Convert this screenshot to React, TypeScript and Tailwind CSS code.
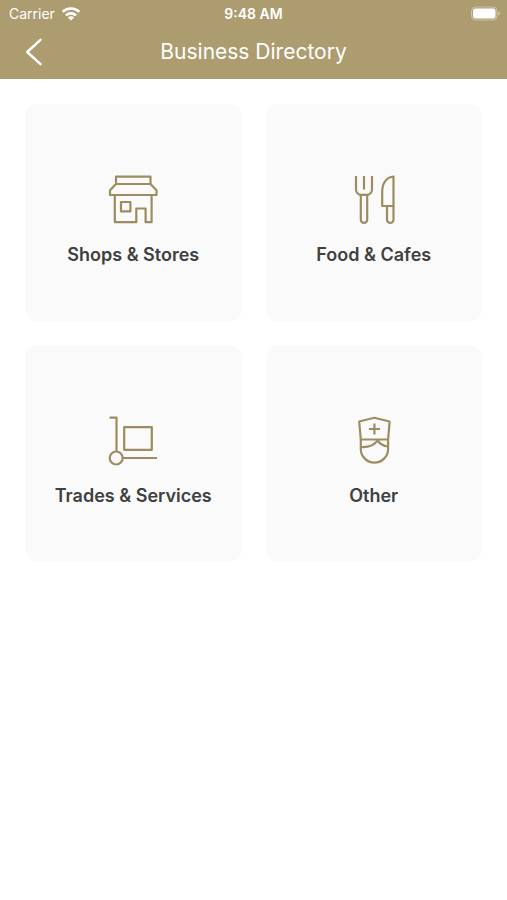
import type { ReactNode } from "react";

type Category = {
  id: string;
  name: string;
  icon: ReactNode;
};

const categories: Category[] = [
  {
    id: "shops",
    name: "Shops & Stores",
    icon: (
      <>
        <path d="M8 9V1.700h34.500V9z" />
        <path d="M8 9L2 15.200V20h46.500v-4.800L42.500 9" />
        <path d="M6.800 20v27.200h21.500V33.500h9.300v13.700h6V20" />
        <path d="M13 27h9.400v9.400H13z" />
      </>
    ),
  },
  {
    id: "food",
    name: "Food & Cafes",
    icon: (
      <>
        <path d="M7 1v13.300c0 3.200 2.200 5.500 5.300 5.500h5.400c3.100 0 5.300-2.300 5.300-5.500V1M15 1v13.500" />
        <path d="M11.800 20v24.700a3.200 3.200 0 0 0 6.400 0V20" />
        <path d="M44.500 1.500V31H33.200V16.500c0-8 4.300-14.500 11.300-15z" />
        <path d="M38 31v13.700a3.200 3.200 0 0 0 6.500 0V31" />
      </>
    ),
  },
  {
    id: "trades",
    name: "Trades & Services",
    icon: (
      <>
        <path d="M1.500 1.700h7v34" />
        <circle cx="8.200" cy="42" r="6.500" />
        <path d="M14.700 42H49M16.200 11.200h27.600v22.600H16.200z" />
      </>
    ),
  },
  {
    id: "other",
    name: "Other",
    icon: (
      <>
        <path d="M11.800 23.500l-1.600-18 15.200-3.700 15.200 3.700-1.500 18z" />
        <path d="M11.800 23.500V33a13.650 13.650 0 0 0 27.300 0v-9.500" />
        <path d="M11.800 31c7.400.5 13.200-1.200 16.900-6.600 2.100 3.600 5.500 5.600 10.400 6.100" />
        <path d="M25.400 7.500v11M20 13h11" />
      </>
    ),
  },
];

function StatusBar() {
  return (
    <div className="grid grid-cols-3 items-center h-7 px-1.5">
      <div className="flex items-center gap-1.5 pl-[3px] text-sm">
        <span>Carrier</span>
        <svg width="20" height="14" viewBox="0 0 20 14" fill="none" stroke="currentColor" strokeWidth="2.6" aria-hidden="true">
          <path d="M1.700 4.900a12 12 0 0 1 16.600 0" />
          <path d="M4.900 8.400a7.400 7.400 0 0 1 10.200 0" />
          <path d="M10 13.600l-3.100-3a4.400 4.400 0 0 1 6.200 0z" fill="currentColor" stroke="none" />
        </svg>
      </div>
      <p className="text-center text-sm font-semibold">9:48 AM</p>
      <svg className="justify-self-end" width="30" height="16" viewBox="0 0 30 16" fill="none" aria-hidden="true">
        <rect x="0.5" y="1" width="25.5" height="13" rx="4" stroke="currentColor" strokeOpacity="0.4" />
        <rect x="2" y="2.5" width="22.5" height="10" rx="2.5" fill="currentColor" />
        <path d="M27.300 5.500v4c1-.4 1.600-1.100 1.600-2s-.6-1.600-1.600-2z" fill="currentColor" fillOpacity="0.45" />
      </svg>
    </div>
  );
}

export default function App() {
  return (
    <div className="min-h-screen bg-white font-['Inter',sans-serif]">
      <header className="bg-[#ac9c70] text-white">
        <StatusBar />
        <div className="grid grid-cols-[48px_1fr_48px] items-center h-[51px] px-2.5 pb-[3px]">
          <button type="button" aria-label="Back" className="flex items-center justify-center h-10 cursor-pointer">
            <svg width="20" height="28" viewBox="0 0 20 28" fill="none" stroke="currentColor" strokeWidth="2.4" strokeLinecap="round" strokeLinejoin="round">
              <path d="M16.500 1.800L3.200 14l13.300 12.200" />
            </svg>
          </button>
          <h1 className="text-center text-[21px] leading-7">Business Directory</h1>
        </div>
      </header>

      <main className="grid grid-cols-2 gap-6 p-[25px]">
        {categories.map((category) => (
          <button
            key={category.id}
            type="button"
            className="flex flex-col items-center justify-center gap-[18px] aspect-square pt-[18px] rounded-xl bg-[#fafafa] cursor-pointer"
          >
            <svg width="50" height="50" viewBox="0 0 50 50" fill="none" stroke="#9c8c60" strokeWidth="2.2" strokeLinejoin="round" aria-hidden="true">
              {category.icon}
            </svg>
            <span className="text-lg leading-6 font-semibold text-[#404040]">{category.name}</span>
          </button>
        ))}
      </main>
    </div>
  );
}
